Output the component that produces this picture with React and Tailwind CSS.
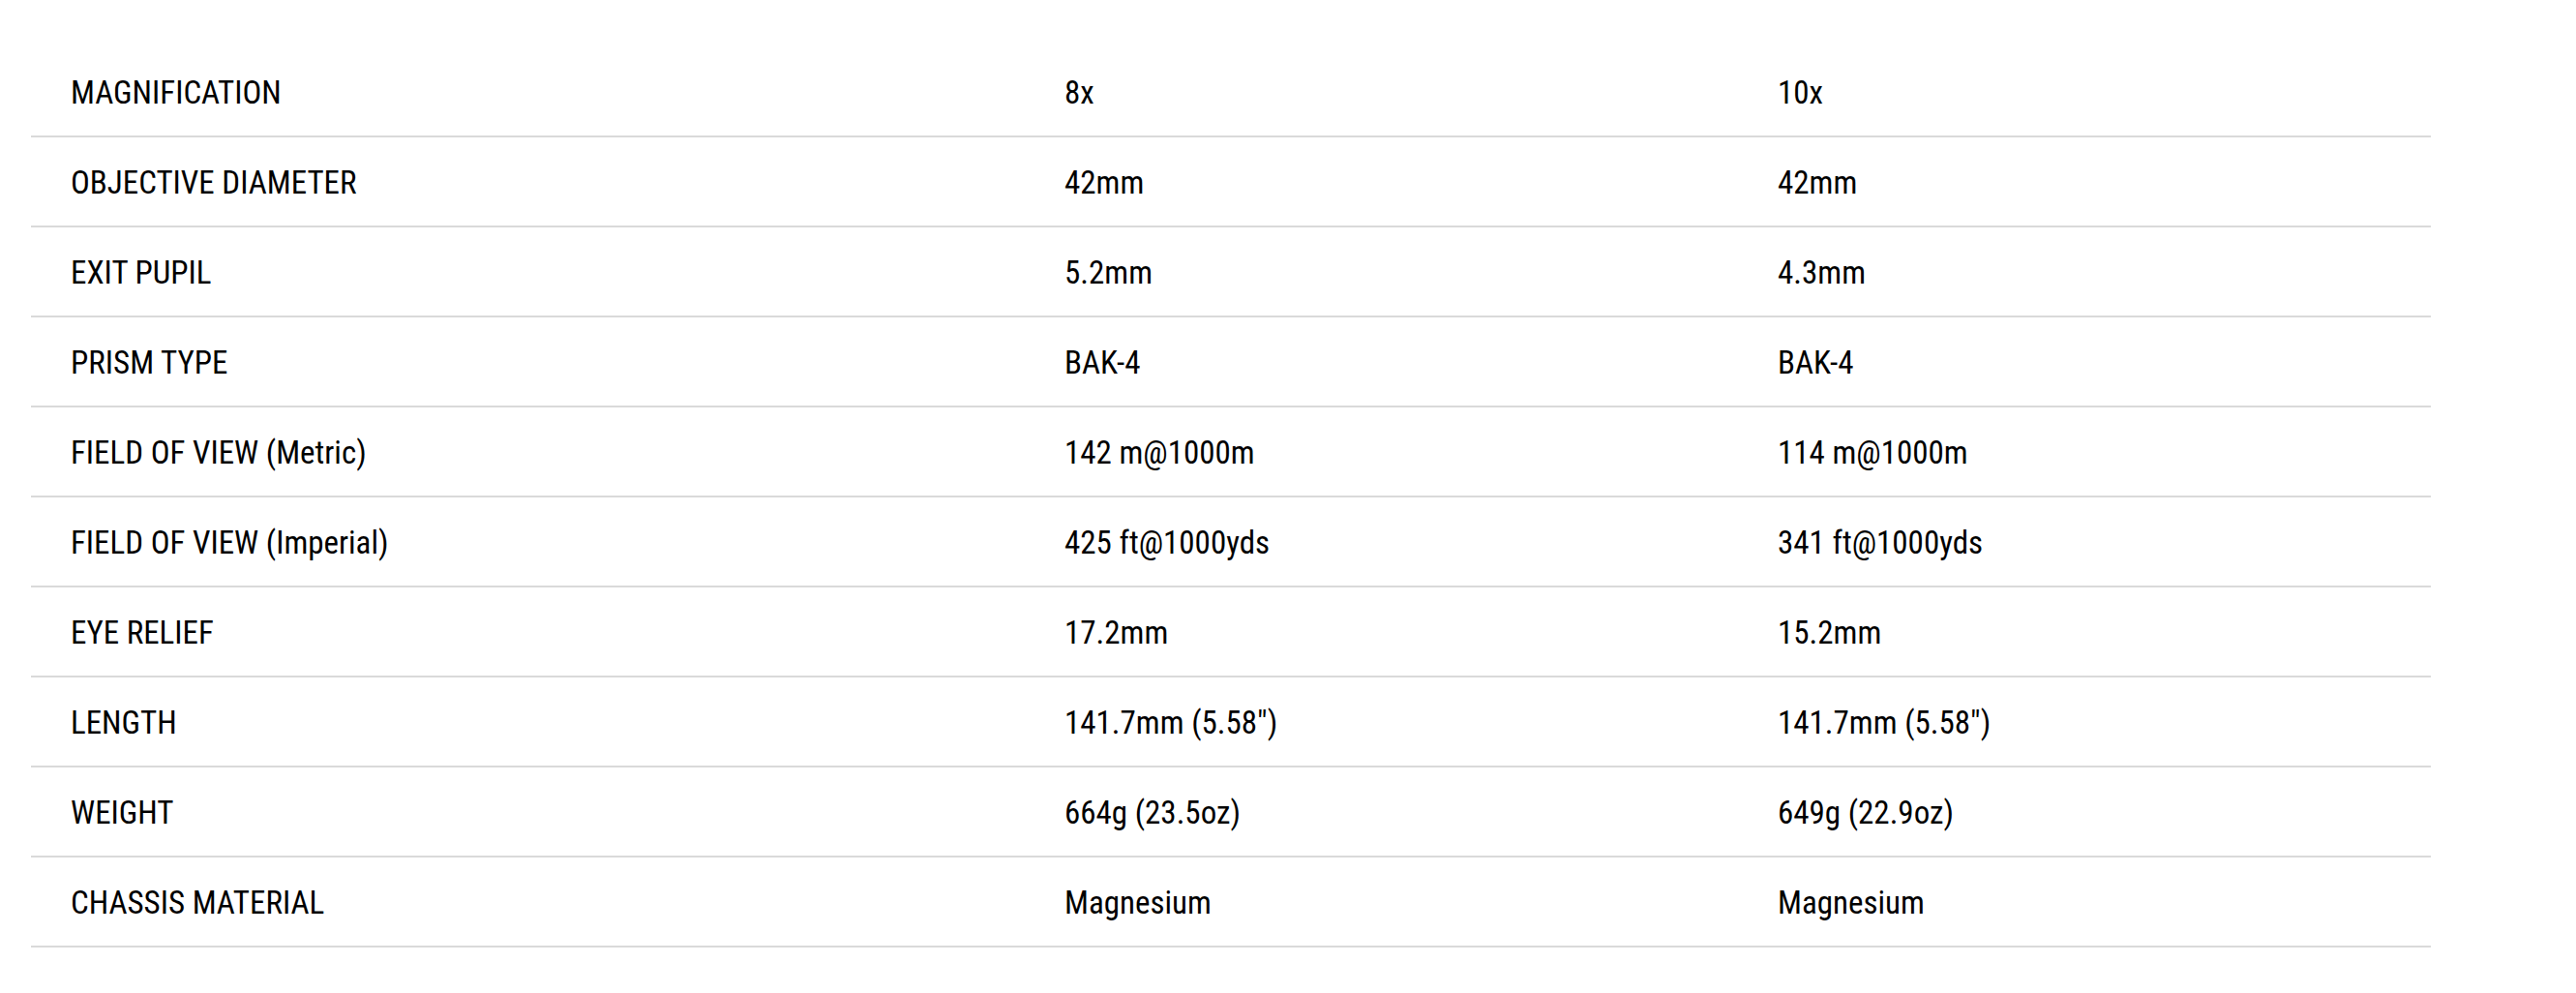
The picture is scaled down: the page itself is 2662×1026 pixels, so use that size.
import React from 'react';

const specs = [
  ['MAGNIFICATION', '8x', '10x'],
  ['OBJECTIVE DIAMETER', '42mm', '42mm'],
  ['EXIT PUPIL', '5.2mm', '4.3mm'],
  ['PRISM TYPE', 'BAK-4', 'BAK-4'],
  ['FIELD OF VIEW (Metric)', '142 m@1000m', '114 m@1000m'],
  ['FIELD OF VIEW (Imperial)', '425 ft@1000yds', '341 ft@1000yds'],
  ['EYE RELIEF', '17.2mm', '15.2mm'],
  ['LENGTH', '141.7mm (5.58″)', '141.7mm (5.58″)'],
  ['WEIGHT', '664g (23.5oz)', '649g (22.9oz)'],
  ['CHASSIS MATERIAL', 'Magnesium', 'Magnesium'],
];

export default function App() {
  return (
    <div className="min-h-screen bg-white pt-[49px] pl-8 text-black font-['Roboto',sans-serif] [font-stretch:75%]">
      <div className="w-[2480px]">
        {specs.map(([label, a, b]) => (
          <div
            key={label}
            className="flex items-center h-[93px] pt-[1px] border-b-2 border-[#dadada] text-[33px] leading-none"
          >
            <div className="w-[1027px] pl-[41px]">{label}</div>
            <div className="w-[737px] pl-[41px]">{a}</div>
            <div className="flex-1 pl-[41px]">{b}</div>
          </div>
        ))}
      </div>
    </div>
  );
}
